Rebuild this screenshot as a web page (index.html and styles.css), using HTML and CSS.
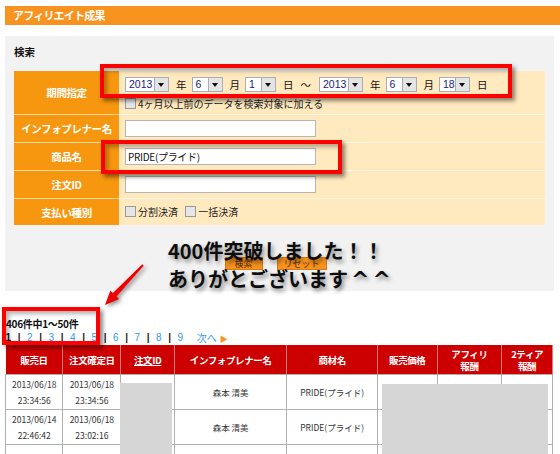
FILE: index.html
```html
<!DOCTYPE html>
<html lang="ja">
<head>
  <meta charset="UTF-8">
  <title>アフィリエイト成果</title>
  <link rel="stylesheet" href="styles.css">
</head>
<body>
  <div class="page">
    <div class="title-bar">アフィリエイト成果</div>

    <div class="search-panel">
      <div class="search-title">検索</div>
      <table class="form-table">
        <tr class="row-period">
          <th>期間指定</th>
          <td>
            <div class="date-line">
              <span class="sel sel-year"><span class="val">2013</span><span class="arrow"></span></span><span class="unit">年</span>
              <span class="sel"><span class="val">6</span><span class="arrow"></span></span><span class="unit">月</span>
              <span class="sel"><span class="val">1</span><span class="arrow"></span></span><span class="unit">日</span>
              <span class="tilde">～</span>
              <span class="sel sel-year"><span class="val">2013</span><span class="arrow"></span></span><span class="unit">年</span>
              <span class="sel"><span class="val">6</span><span class="arrow"></span></span><span class="unit">月</span>
              <span class="sel"><span class="val">18</span><span class="arrow"></span></span><span class="unit">日</span>
            </div>
            <label class="check"><span class="box"></span>4ヶ月以上前のデータを検索対象に加える</label>
          </td>
        </tr>
        <tr>
          <th>インフォプレナー名</th>
          <td><div class="text-input"></div></td>
        </tr>
        <tr>
          <th>商品名</th>
          <td><div class="text-input">PRIDE(プライド)</div></td>
        </tr>
        <tr>
          <th>注文ID</th>
          <td><div class="text-input"></div></td>
        </tr>
        <tr>
          <th>支払い種別</th>
          <td>
            <label class="check"><span class="box"></span>分割決済</label>
            <label class="check"><span class="box"></span>一括決済</label>
          </td>
        </tr>
      </table>
      <div class="buttons">
        <span class="btn btn-search">検索</span>
        <span class="btn btn-reset">リセット</span>
      </div>
    </div>

    <div class="result-count">406件中1～50件</div>
    <div class="pager">
      <span class="pg current">1</span><span class="pg sep">|</span>
      <span class="pg link">2</span><span class="pg sep">|</span>
      <span class="pg link">3</span><span class="pg sep">|</span>
      <span class="pg link">4</span><span class="pg sep">|</span>
      <span class="pg link">5</span><span class="pg sep">|</span>
      <span class="pg link">6</span><span class="pg sep">|</span>
      <span class="pg link">7</span><span class="pg sep">|</span>
      <span class="pg link">8</span><span class="pg sep">|</span>
      <span class="pg link">9</span>
      <span class="next">次へ<span class="next-arrow">▶</span></span>
    </div>

    <table class="result-table">
      <tr>
        <th class="c-date">販売日</th>
        <th class="c-date2">注文確定日</th>
        <th class="c-id"><u>注文ID</u></th>
        <th class="c-info">インフォプレナー名</th>
        <th class="c-item">商材名</th>
        <th class="c-price">販売価格</th>
        <th class="c-aff">アフィリ<br>報酬</th>
        <th class="c-tier">2ティア<br>報酬</th>
      </tr>
      <tr>
        <td>2013/06/18<br>23:34:56</td>
        <td>2013/06/18<br>23:34:56</td>
        <td></td>
        <td>森本 清美</td>
        <td>PRIDE(プライド)</td>
        <td></td><td></td><td></td>
      </tr>
      <tr>
        <td>2013/06/14<br>22:46:42</td>
        <td>2013/06/18<br>23:02:16</td>
        <td></td>
        <td>森本 清美</td>
        <td>PRIDE(プライド)</td>
        <td></td><td></td><td></td>
      </tr>
      <tr>
        <td>&nbsp;<br>&nbsp;</td><td></td><td></td><td></td><td></td><td></td><td></td><td></td>
      </tr>
    </table>

    <!-- annotations drawn over the screenshot -->
    <div class="mark mark-period"></div>
    <div class="mark mark-item"></div>
    <div class="mark mark-count"></div>
    <div class="mask mask-id"></div>
    <div class="mask mask-price"></div>
    <svg class="arrow-note" width="60" height="56" viewBox="0 0 60 56">
      <polygon points="10,47 15.3,32.7 17.9,35.1 47.3,6.3 48.7,7.7 21.5,38.5 24.1,40.9" fill="#ee0000"/>
    </svg>
    <div class="note">400件突破しました！！<br>ありがとございます<span class="carets">^^</span></div>
  </div>
</body>
</html>
```

FILE: styles.css
```css
body {
  margin: 0;
  background: #ffffff;
  font-family: "Noto Sans CJK JP", "Liberation Sans", sans-serif;
  color: #222222;
  overflow: hidden;
}

.page {
  position: relative;
  padding: 6px 0 0 5px;
}

.title-bar {
  height: 19px;
  line-height: 19px;
  background: #f7931e;
  color: #ffffff;
  font-size: 11px;
  font-weight: bold;
  letter-spacing: -0.8px;
  padding-left: 8px;
}

.search-panel {
  width: 549px;
  height: 255px;
  box-sizing: border-box;
  margin-top: 11px;
  padding: 8px 9px 0;
  background: #f2f2f2;
}

.search-title {
  font-size: 10.5px;
  font-weight: bold;
  line-height: 15px;
  margin-bottom: 12px;
  color: #111111;
}

.form-table {
  width: 531px;
  border-collapse: collapse;
}

.form-table th {
  width: 105px;
  height: 27px;
  padding: 0;
  background: #f7960f;
  color: #ffffff;
  font-size: 10.5px;
  font-weight: bold;
  letter-spacing: -0.4px;
  text-align: center;
  border-bottom: 1px solid #fbd8a0;
}

.form-table td {
  height: 27px;
  padding: 0 0 0 6px;
  background: #ffe9bf;
  border-bottom: 1px solid #fff5e2;
  font-size: 10px;
}

.form-table tr:last-child th,
.form-table tr:last-child td {
  height: 26px;
  border-bottom: none;
}

.form-table .row-period th,
.form-table .row-period td {
  height: 43px;
  vertical-align: top;
}

.form-table .row-period th {
  vertical-align: middle;
}

.date-line {
  display: flex;
  align-items: center;
  height: 15px;
  margin-top: 6px;
}

.sel {
  display: flex;
  width: 31px;
  height: 15px;
  box-sizing: border-box;
  border: 1px solid #a9aeb4;
  background: #ffffff;
}

.sel-year {
  width: 44px;
}

.sel .val {
  flex: 1;
  font-size: 10.5px;
  line-height: 13px;
  padding-left: 3px;
  color: #1c1c70;
  font-family: "Liberation Sans", sans-serif;
}

.sel .arrow {
  position: relative;
  width: 13px;
  background: #e4e4e4;
  border-left: 1px solid #a9aeb4;
}

.sel .arrow::after {
  content: "";
  position: absolute;
  left: 3px;
  top: 5px;
  border-left: 3.5px solid transparent;
  border-right: 3.5px solid transparent;
  border-top: 4px solid #111111;
}

.unit {
  margin: 0 5px 0 7px;
  font-size: 10.5px;
  color: #111111;
}

.tilde {
  margin: 0 8px 0 2px;
  font-size: 10.5px;
  color: #111111;
}

.check {
  display: inline-flex;
  align-items: center;
  margin-right: 5px;
  font-size: 10px;
  color: #222222;
}

.row-period .check {
  margin-top: 4px;
}

.check .box {
  width: 9px;
  height: 9px;
  margin-right: 2px;
  border: 1px solid #9a9a9a;
  background: #e6e6e6;
}

.text-input {
  width: 191px;
  height: 17px;
  box-sizing: border-box;
  border: 1px solid #b5b5b5;
  background: #ffffff;
  font-size: 10px;
  line-height: 15px;
  padding-left: 2px;
  letter-spacing: -0.3px;
  color: #111111;
}

.buttons {
  display: flex;
  justify-content: center;
  gap: 14px;
  margin-top: 32px;
  padding-right: 8px;
}

.btn {
  height: 13px;
  line-height: 12px;
  box-sizing: border-box;
  background: #f7921e;
  border: 1px solid #d67a14;
  color: #5a2c00;
  font-size: 9px;
  text-align: center;
}

.btn-search { width: 38px; }
.btn-reset { width: 50px; }

.result-count {
  margin-top: 26px;
  padding-left: 1px;
  font-size: 10px;
  font-weight: bold;
  line-height: 13px;
  letter-spacing: -0.3px;
  color: #111111;
}

.pager {
  display: flex;
  align-items: center;
  height: 13px;
  margin: 1px 0 0 -2px;
  font-size: 10px;
  font-family: "Liberation Sans", sans-serif;
}

.pg {
  width: 10.75px;
  text-align: center;
}

.pg.current { color: #111111; font-weight: bold; }
.pg.sep { color: #222222; font-weight: bold; }
.pg.link { color: #3399ee; }

.next {
  margin-left: 11px;
  color: #3399ee;
  font-family: "Noto Sans CJK JP", sans-serif;
}

.next-arrow {
  margin-left: 3px;
  color: #f7931e;
  font-size: 8px;
}

.result-table {
  width: 548px;
  margin-top: 1px;
  border-collapse: collapse;
  font-size: 8.5px;
  color: #333333;
}

.result-table th {
  height: 29px;
  padding: 0;
  background: #cc0000;
  color: #ffffff;
  font-size: 9.5px;
  font-weight: bold;
  line-height: 12px;
  letter-spacing: -0.4px;
  border-left: 1px solid #e77b7b;
  border-right: 1px solid #e77b7b;
}

.result-table th:first-child { border-left: none; }
.result-table th u { text-decoration-color: #ffffff; }

.result-table td {
  height: 34px;
  padding: 0;
  text-align: center;
  line-height: 16px;
  border: 1px solid #b0b0b0;
  background: #ffffff;
}

.c-date { width: 57px; }
.c-date2 { width: 57px; }
.c-id { width: 53px; }
.c-info { width: 112px; }
.c-item { width: 90px; }
.c-price { width: 59px; }
.c-aff { width: 64px; }
.c-tier { width: 50px; }

.mark {
  position: absolute;
  box-sizing: border-box;
  border: 4px solid #ff0000;
  box-shadow: 3px 3px 4px rgba(0, 0, 0, 0.45), inset 3px 3px 4px rgba(0, 0, 0, 0.3);
}

.mark-period { left: 100px; top: 64px; width: 412px; height: 34px; }
.mark-item { left: 101px; top: 140px; width: 241px; height: 34px; }
.mark-count { left: 2px; top: 307px; width: 98px; height: 38px; }

.mask {
  position: absolute;
  background: #d6d6d6;
}

.mask-id { left: 120px; top: 383px; width: 52px; height: 80px; }
.mask-price { left: 382px; top: 384px; width: 166px; height: 80px; }

.arrow-note {
  position: absolute;
  left: 95px;
  top: 258px;
  filter: drop-shadow(2px 2px 2px rgba(0, 0, 0, 0.45));
}

.note {
  position: absolute;
  left: 168px;
  top: 237px;
  font-size: 20px;
  font-weight: bold;
  line-height: 28px;
  color: #0d0d0d;
  text-shadow: 2px 3px 4px rgba(0, 0, 0, 0.45);
}

.carets {
  margin-left: 3px;
  font-family: "DejaVu Sans", sans-serif;
  font-size: 22px;
  letter-spacing: 3px;
}
```
